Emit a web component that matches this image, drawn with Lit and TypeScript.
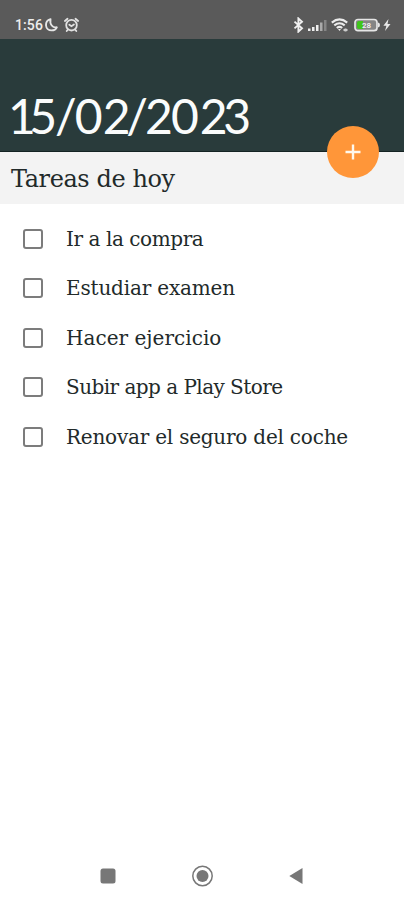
import { LitElement, html, css } from "lit";
import { customElement, property } from "lit/decorators.js";

@customElement("status-bar")
class StatusBar extends LitElement {
  static styles = css`
    :host { display: flex; align-items: center; height: 39px; box-sizing: border-box; padding: 10px 13px 0 15px; background: #5a5a5a; color: #ededed; }
    .clock { font: 500 14px/16px Roboto, sans-serif; letter-spacing: 0.1px; width: 29px; white-space: nowrap; }
    svg { display: block; flex: none; }
    .alarm { margin-left: 4px; }
    .gap { flex: 1; }
    .signal { margin-left: 4px; }
    .wifi { margin-left: 4px; }
    .battery { margin-left: 5px; }
    .bolt { margin-left: 2px; }
    .level { font: 700 8px Roboto, sans-serif; }
  `;
  render() {
    return html`
      <span class="clock">1:56</span>
      <svg class="moon" width="16" height="16" viewBox="0 0 16 16"><path d="M6.500 2.200C3.500 3 1.900 5.400 2 8.200c.2 3.100 2.600 5.200 5.600 5.200 2.500 0 4.400-1.200 5.200-3.100C8.700 11 5.500 7.500 6.500 2.200Z" fill="none" stroke="#e6e6e6" stroke-width="1.900" stroke-linejoin="round"/></svg>
      <svg class="alarm" width="16" height="16" viewBox="0 0 16 16" fill="none" stroke="#e2e2e2" stroke-width="1.800" stroke-linecap="round"><circle cx="7.500" cy="8.200" r="5.300"/><path d="M.9 4 3.500 1.800M14.100 4 11.500 1.800M5.300 7.700l2.200 1.500 2.400-1.700M3.700 12.800l-1 1.200M11.300 12.800l1 1.200"/></svg>
      <span class="gap"></span>
      <svg width="11" height="16" viewBox="0 0 11 16"><path d="M1.500 4.600 9 11.200 5.400 14.600V1.500L9 4.800 1.500 11.400" fill="none" stroke="#f0f0f0" stroke-width="1.900"/></svg>
      <svg class="signal" width="19" height="16" viewBox="0 0 19 16"><path fill="#eee" d="M0 11.500h2.500V14H0zM4 10h2.500v4H4zM8 8h2.500v6H8z"/><path fill="#aaa" d="M12 5.500h2.500V14H12z"/><path fill="#858585" d="M16 3h2.500v11H16z"/></svg>
      <svg class="wifi" width="18" height="16" viewBox="0 0 18 16" fill="none" stroke="#ececec" stroke-width="2.100"><path d="M.8 5.600Q8.500-.8 16.200 5.600M3.300 8.400q5.200-4.300 10.400 0M5.800 11q2.700-2.200 5.400 0"/><path d="m7 12 1.500 2 1.500-2z" fill="#ececec" stroke="none"/><path d="M12.500 13h4M14.500 11.500v3" stroke="#ccc" stroke-width="2"/></svg>
      <svg class="battery" width="27" height="14" viewBox="0 0 27 14"><rect x="1" y="1.500" width="22" height="11.200" rx="3" fill="#858585" stroke="#e6e6e6" stroke-width="1.700"/><path d="M3 5q0-2 2-2h4v8H5q-2 0-2-2z" fill="#3fc51b"/><path d="M24 4.500q2 .3 2 2.500t-2 2.500z" fill="#e6e6e6"/><text class="level" x="8" y="10" fill="#eee">28</text></svg>
      <svg class="bolt" width="8" height="14" viewBox="0 0 8 14"><path d="M5.500 1 .4 7.800h3L2 13l5.500-7h-3z" fill="#e8e8e8"/></svg>
    `;
  }
}

@customElement("task-row")
class TaskRow extends LitElement {
  @property() label = "";
  @property({ type: Number }) spacing = 0;
  static styles = css`
    :host { display: flex; align-items: center; height: 49.5px; padding-left: 23px; }
    .box { width: 20px; height: 20px; box-sizing: border-box; border: 2px solid #7c7c7c; border-radius: 3px; flex: none; }
    .label { margin-left: 23px; font: 20px/28px "DejaVu Serif", serif; color: #222a2a; white-space: nowrap; }
  `;
  render() {
    return html`<span class="box"></span><span class="label" style="letter-spacing:${this.spacing}px">${this.label}</span>`;
  }
}

@customElement("app-root")
class AppRoot extends LitElement {
  tasks = [
    { label: "Ir a la compra", spacing: -0.43 },
    { label: "Estudiar examen", spacing: -0.17 },
    { label: "Hacer ejercicio", spacing: 0.03 },
    { label: "Subir app a Play Store", spacing: -0.54 },
    { label: "Renovar el seguro del coche", spacing: -0.22 },
  ];
  // Each character of the date with the kerning that follows it, in pixels.
  date: [string, number][] = [
    ["1", -6.5], ["5", -2.2], ["/", -2], ["0", 0.3], ["2", -4.5],
    ["/", -3], ["2", -1.7], ["0", 0.8], ["2", -4.2], ["3", 0],
  ];
  static styles = css`
    :host { display: flex; flex-direction: column; height: 900px; background: #fff; overflow: hidden; }
    .header { position: relative; height: 113px; box-sizing: border-box; background: #293b3b; border-bottom: 1px solid #142323; padding: 49px 0 0 8px; }
    .date { font: 48px/56px Lato, sans-serif; color: #fafcfc; white-space: nowrap; }
    .add { position: absolute; left: 327px; top: 87px; width: 52px; height: 52px; border: 0; border-radius: 50%; background: #ff9639; padding: 0; display: grid; place-items: center; }
    .section { height: 52px; box-sizing: border-box; background: #f3f3f3; padding: 10px 0 0 11px; font: 24px/34px "DejaVu Serif", serif; letter-spacing: -0.42px; color: #222a2a; white-space: nowrap; }
    .list { padding-top: 10px; flex: 1; }
    .nav { height: 48px; display: grid; grid-template-columns: 16px 22px 14px; justify-content: start; column-gap: 75.5px; align-items: center; padding-left: 100px; }
    svg { display: block; }
  `;
  render() {
    return html`
      <status-bar></status-bar>
      <div class="header">
        <div class="date">${this.date.map(([c, k]) => html`<span style="letter-spacing:${k}px">${c}</span>`)}</div>
        <button class="add" aria-label="Añadir"><svg width="16" height="16" viewBox="0 0 16 16"><path d="M8 .5v15M.5 8h15" stroke="#fff8ec" stroke-width="2.400"/></svg></button>
      </div>
      <div class="section">Tareas de hoy</div>
      <div class="list">${this.tasks.map((t) => html`<task-row .label=${t.label} .spacing=${t.spacing}></task-row>`)}</div>
      <div class="nav">
        <svg width="16" height="16"><rect x=".5" y=".5" width="15" height="15" rx="2.500" fill="#777"/></svg>
        <svg width="22" height="22"><circle cx="10.500" cy="11" r="9.700" fill="none" stroke="#777" stroke-width="1.500"/><circle cx="10.500" cy="11" r="6" fill="#777"/></svg>
        <svg width="14" height="18"><path d="M.3 9 13.500 1v16z" fill="#777"/></svg>
      </div>
    `;
  }
}
